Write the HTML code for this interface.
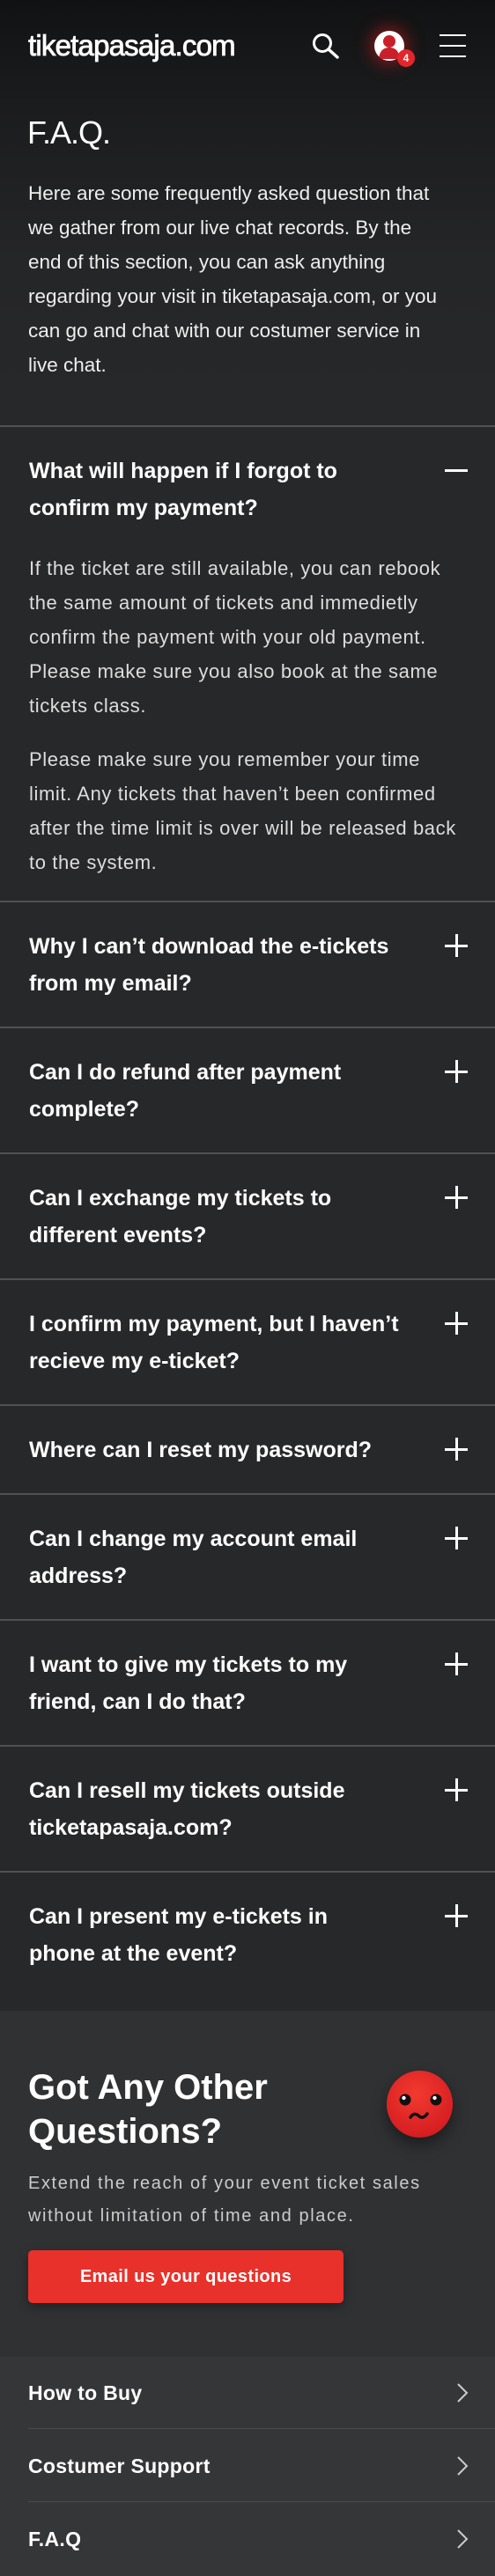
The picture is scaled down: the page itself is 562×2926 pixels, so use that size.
<!DOCTYPE html>
<html><head><meta charset="utf-8"><style>
*{margin:0;padding:0;box-sizing:border-box}
body{width:562px;height:2926px;background:#27282a;font-family:"Liberation Sans",Arial,sans-serif;color:#fff;overflow:hidden}
.top{background:linear-gradient(#111213 0px,#1b1c1e 120px,#252628 300px,#27282a 480px);height:483px;position:relative}
.logo{position:absolute;left:32px;top:33px;font-size:33px;font-weight:normal;letter-spacing:-0.8px;color:#fff;-webkit-text-stroke:0.8px #fff}
h1{position:absolute;left:31px;top:130px;font-size:36px;font-weight:normal;letter-spacing:-1px}
.intro{position:absolute;left:32px;top:200px;width:470px;font-size:22.5px;line-height:39px;color:#eee}
.q{border-top:2px solid #505153;position:relative;padding:29px 112px 28px 33px;font-size:25px;font-weight:bold;line-height:42px}
.q .ic{position:absolute;right:31px;top:36px;width:26px;height:26px}
.q .ic:before{content:"";position:absolute;left:0;top:12px;width:26px;height:2.5px;background:#fff}
.q .ic.p:after{content:"";position:absolute;left:12px;top:0;width:2.5px;height:26px;background:#fff}
.ans{padding:0 10px 24px 33px;font-size:22px;line-height:39px;letter-spacing:0.6px;color:#ddd;white-space:nowrap}
.ans p{margin-bottom:22px}
.cta{position:absolute;top:2284px;left:0;width:562px;height:393px;background:#303133}
.menu{position:absolute;top:2677px;left:0;width:562px;height:249px;background:#353638}
.mi{position:absolute;left:32px;right:0;height:82px;font-size:23px;font-weight:bold;letter-spacing:.3px;line-height:82px}
.mi svg{position:absolute;right:30px;top:29px}
</style></head><body>
<div class="top">
<div class="logo">tiketapasaja.com</div>
<svg style="position:absolute;left:354px;top:37px" width="34" height="32" viewBox="0 0 34 32"><circle cx="12" cy="12" r="9.5" fill="none" stroke="#fff" stroke-width="3"/><line x1="19" y1="19" x2="29" y2="28" stroke="#fff" stroke-width="3.5" stroke-linecap="round"/></svg>
<div style="position:absolute;left:425px;top:35px;width:34px;height:34px;border-radius:50%;background:#fff;box-shadow:0 0 18px 4px rgba(220,30,30,.55);overflow:hidden">
<svg width="34" height="34" viewBox="0 0 34 34"><circle cx="17" cy="12" r="7" fill="#c8202a"/><path d="M5 32 C6 22 11 19 17 19 C23 19 28 22 29 32 Z" fill="#c8202a"/></svg></div>
<div style="position:absolute;left:451px;top:56px;width:20px;height:20px;border-radius:50%;background:#e3262b;font-size:12px;font-weight:bold;text-align:center;line-height:20px">4</div>
<div style="position:absolute;left:499px;top:39px;width:30px;height:2px;background:#fff"></div>
<div style="position:absolute;left:499px;top:51px;width:30px;height:2px;background:#fff"></div>
<div style="position:absolute;left:499px;top:63px;width:30px;height:2px;background:#fff"></div>
<h1>F.A.Q.</h1>
<div class="intro">Here are some frequently asked question that we gather from our live chat records. By the end of this section, you can ask anything regarding your visit in tiketapasaja.com, or you can go and chat with our costumer service in live chat.</div>
</div>
<div>
<div class="q">What will happen if I forgot to confirm my payment?<span class="ic"></span></div>
<div class="ans"><p>If the ticket are still available, you can rebook<br>the same amount of tickets and immedietly<br>confirm the payment with your old payment.<br>Please make sure you also book at the same<br>tickets class.</p><p style="margin:0">Please make sure you remember your time<br>limit. Any tickets that haven’t been confirmed<br>after the time limit is over will be released back<br>to the system.</p></div>
<div class="q">Why I can’t download the e-tickets from my email?<span class="ic p"></span></div>
<div class="q">Can I do refund after payment complete?<span class="ic p"></span></div>
<div class="q">Can I exchange my tickets to different events?<span class="ic p"></span></div>
<div class="q" style="padding-right:90px">I confirm my payment, but I haven’t recieve my e-ticket?<span class="ic p"></span></div>
<div class="q">Where can I reset my password?<span class="ic p"></span></div>
<div class="q">Can I change my account email address?<span class="ic p"></span></div>
<div class="q">I want to give my tickets to my friend, can I do that?<span class="ic p"></span></div>
<div class="q">Can I resell my tickets outside ticketapasaja.com?<span class="ic p"></span></div>
<div class="q">Can I present my e-tickets in phone at the event?<span class="ic p"></span></div>
</div>
<div class="cta">
<div style="position:absolute;left:32px;top:62px;font-size:40px;font-weight:bold;line-height:50px">Got Any Other<br>Questions?</div>
<div style="position:absolute;left:439px;top:68px;width:75px;height:76px;border-radius:50%;background:radial-gradient(circle at 45% 35%,#f23a30,#d81f22 70%,#b5161a);box-shadow:0 8px 18px rgba(0,0,0,.45)">
<svg width="75" height="76" viewBox="0 0 75 76"><circle cx="21" cy="33" r="6.5" fill="#111"/><circle cx="56" cy="33" r="6.5" fill="#111"/><circle cx="19.5" cy="31" r="2.2" fill="#fff"/><circle cx="54.5" cy="31" r="2.2" fill="#fff"/><path d="M27 53 Q31 47 36 51 Q41 56 46 49" fill="none" stroke="#111" stroke-width="3.5" stroke-linecap="round"/></svg></div>
<div style="position:absolute;left:32px;top:178px;width:520px;font-size:20px;line-height:37px;letter-spacing:1.6px;color:#ccc">Extend the reach of your event ticket sales without limitation of time and place.</div>
<div style="position:absolute;left:32px;top:272px;width:358px;height:60px;background:#e8312a;border-radius:5px;box-shadow:0 4px 12px rgba(0,0,0,.35);text-align:center;line-height:60px;font-size:20px;font-weight:bold;letter-spacing:.4px">Email us your questions</div>
</div>
<div class="menu">
<div class="mi" style="top:0;border-bottom:1.5px solid #4a4b4d">How to Buy<svg width="14" height="24" viewBox="0 0 14 24"><path d="M2 2 L12 12 L2 22" fill="none" stroke="#ccc" stroke-width="2"/></svg></div>
<div class="mi" style="top:83px;border-bottom:1.5px solid #4a4b4d">Costumer Support<svg width="14" height="24" viewBox="0 0 14 24"><path d="M2 2 L12 12 L2 22" fill="none" stroke="#ccc" stroke-width="2"/></svg></div>
<div class="mi" style="top:166px">F.A.Q<svg width="14" height="24" viewBox="0 0 14 24"><path d="M2 2 L12 12 L2 22" fill="none" stroke="#ccc" stroke-width="2"/></svg></div>
</div>
</body></html>
